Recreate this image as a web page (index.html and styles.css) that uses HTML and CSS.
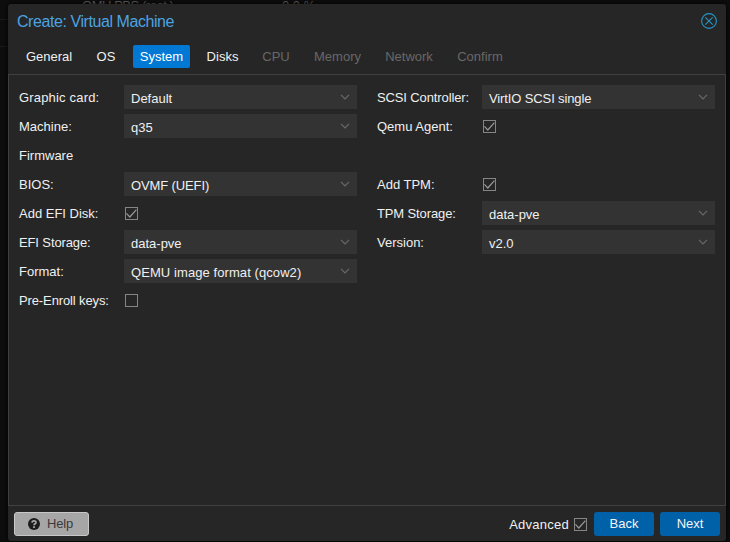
FILE: index.html
```html
<!DOCTYPE html>
<html lang="en">
<head>
<meta charset="utf-8">
<title>Create: Virtual Machine</title>
<link rel="stylesheet" href="styles.css">
</head>
<body>
<svg class="defs" width="0" height="0" aria-hidden="true">
  <symbol id="chevron" viewBox="0 0 10 6"><path d="M1 .8 5 4.8 9 .8" fill="none" stroke="currentColor" stroke-width="1.2"/></symbol>
  <symbol id="check" viewBox="0 0 11 11"><path d="M.4 5.4 3.8 9 10.4 1.6" fill="none" stroke="currentColor" stroke-width="1.2"/></symbol>
</svg>
<div class="backdrop"><span class="behind-name">OMU PBS (root )</span><span class="behind-value">0.0 %</span><i class="rule rule-a"></i><i class="rule rule-b"></i></div>
<main class="window">
  <header class="titlebar">
    <h1>Create: Virtual Machine</h1>
    <svg class="close" viewBox="0 0 16 16"><circle cx="8" cy="8" r="7.4"/><path d="m4.3 4.3 7.4 7.4m0-7.4-7.4 7.4"/></svg>
  </header>
  <nav class="tabs">
    <span class="tab general">General</span><span class="tab os">OS</span><span class="tab system active">System</span><span class="tab disks">Disks</span><span class="tab cpu off">CPU</span><span class="tab memory off">Memory</span><span class="tab network off">Network</span><span class="tab confirm off">Confirm</span>
  </nav>
  <section class="form">
    <div class="column">
      <div class="row"><label class="wide">Graphic card:</label><div class="field"><span>Default</span><svg><use href="#chevron"/></svg></div></div>
      <div class="row"><label>Machine:</label><div class="field"><span>q35</span><svg><use href="#chevron"/></svg></div></div>
      <div class="row"><label>Firmware</label></div>
      <div class="row"><label>BIOS:</label><div class="field"><span class="tight">OVMF (UEFI)</span><svg><use href="#chevron"/></svg></div></div>
      <div class="row"><label>Add EFI Disk:</label><div class="box"><svg><use href="#check"/></svg></div></div>
      <div class="row"><label class="tight">EFI Storage:</label><div class="field"><span>data-pve</span><svg><use href="#chevron"/></svg></div></div>
      <div class="row"><label>Format:</label><div class="field"><span class="format">QEMU image format (qcow2)</span><svg><use href="#chevron"/></svg></div></div>
      <div class="row"><label class="tight">Pre-Enroll keys:</label><div class="box"></div></div>
    </div>
    <div class="column">
      <div class="row"><label class="tight">SCSI Controller:</label><div class="field"><span class="tight">VirtIO SCSI single</span><svg><use href="#chevron"/></svg></div></div>
      <div class="row"><label>Qemu Agent:</label><div class="box"><svg><use href="#check"/></svg></div></div>
      <div class="row"></div>
      <div class="row"><label>Add TPM:</label><div class="box"><svg><use href="#check"/></svg></div></div>
      <div class="row"><label class="tight">TPM Storage:</label><div class="field"><span>data-pve</span><svg><use href="#chevron"/></svg></div></div>
      <div class="row"><label>Version:</label><div class="field"><span>v2.0</span><svg><use href="#chevron"/></svg></div></div>
    </div>
  </section>
  <footer class="footer">
    <div class="button help"><svg viewBox="0 0 12 12"><circle cx="6" cy="6" r="6" fill="#1c1c1c"/><path d="M4 4.6C4.1 2.3 8 2.2 8 4.4 8 5.8 6 5.7 6 7.3" fill="none" stroke="#a6a6a6" stroke-width="1.7"/><path d="M5.1 8.2h1.8v1.7H5.1z" fill="#a6a6a6"/></svg><span>Help</span></div>
    <span class="advanced">Advanced</span>
    <div class="box"><svg><use href="#check"/></svg></div>
    <div class="button back">Back</div>
    <div class="button next">Next</div>
  </footer>
</main>
</body>
</html>
```
FILE: styles.css
```css
* { box-sizing: border-box; }
body {
  margin: 0;
  height: 542px;
  padding: 4px 4px 1px 8px;
  overflow: hidden;
  background: #0e0e0e;
  color: #f0f0f0;
  font: 13px/24px "Liberation Sans", Arial, sans-serif;
}
.defs { position: absolute; }
.backdrop {
  position: absolute;
  top: 0;
  left: 0;
  width: 730px;
  height: 542px;
  overflow: hidden;
  color: #666;
}
.behind-name, .behind-value { position: absolute; top: -6px; left: 82px; letter-spacing: -.45px; }
.behind-value { left: 282px; letter-spacing: 0; }
.rule { position: absolute; left: 0; width: 8px; height: 1px; background: #1c1c1c; }
.rule-a { top: 19px; }
.rule-b { top: 46px; }
.window {
  position: relative;
  display: flex;
  flex-direction: column;
  height: 537px;
  background: #262626;
  border-radius: 3px;
  box-shadow: 0 0 6px #000;
}
.titlebar {
  display: flex;
  justify-content: space-between;
  height: 41px;
  padding: 9px 9px 0;
}
h1 {
  margin: -3px 0 0;
  color: #4ca3e0;
  font-size: 16px;
  font-weight: 400;
  line-height: 24px;
  letter-spacing: -.43px;
}
.close { width: 16px; height: 16px; fill: none; stroke: #2596c8; stroke-width: 1.1; }
.tabs { display: flex; gap: 11px; height: 29px; padding-left: 11px; }
.tab { height: 23px; line-height: 24px; text-align: center; border-radius: 2px; white-space: nowrap; }
.general { width: 60px; }
.os { width: 32px; }
.system { width: 57px; }
.disks { width: 45px; margin-left: -1px; }
.cpu { width: 40px; }
.memory { width: 61px; }
.network { width: 62px; margin-left: -1px; }
.confirm { width: 60px; margin-left: -1px; }
.active { background: #0078d4; color: #fff; }
.off { color: #686868; }
.form {
  display: grid;
  grid-template-columns: 338px 338px;
  column-gap: 20px;
  align-content: start;
  height: 432px;
  padding: 10px;
  border: 1px solid #404040;
}
.column { display: grid; row-gap: 5px; align-content: start; }
.row { display: flex; height: 24px; }
label { width: 105px; line-height: 25px; white-space: nowrap; }
.wide { letter-spacing: .18px; }
.tight { letter-spacing: -.12px; }
.format { letter-spacing: .08px; }
.field {
  display: flex;
  justify-content: space-between;
  width: 233px;
  padding: 0 7px;
  background: #333;
  line-height: 27px;
}
.field svg { width: 10px; height: 6px; margin-top: 9px; color: #696969; }
.box { width: 13px; height: 13px; margin: 6px 0 0 1px; border: 1px solid #858585; color: #999; }
.box svg { display: block; width: 11px; height: 11px; }
.footer { display: flex; height: 35px; padding: 6px 6px 0; }
.button { display: flex; align-items: center; justify-content: center; width: 60px; height: 24px; border-radius: 3px; background: #0060a8; color: #f4f4f4; }
.help { width: 75px; padding-right: 2px; gap: 7px; margin-right: auto; border: 1px solid #c8c8c8; background: #a6a6a6; color: #3a3a3a; }
.help svg { width: 12px; height: 12px; }
.help span { letter-spacing: -.2px; }
.advanced { line-height: 25px; letter-spacing: .25px; }
.footer .box { margin: 6px 7px 0 5px; }
.next { margin-left: 6px; }
```
